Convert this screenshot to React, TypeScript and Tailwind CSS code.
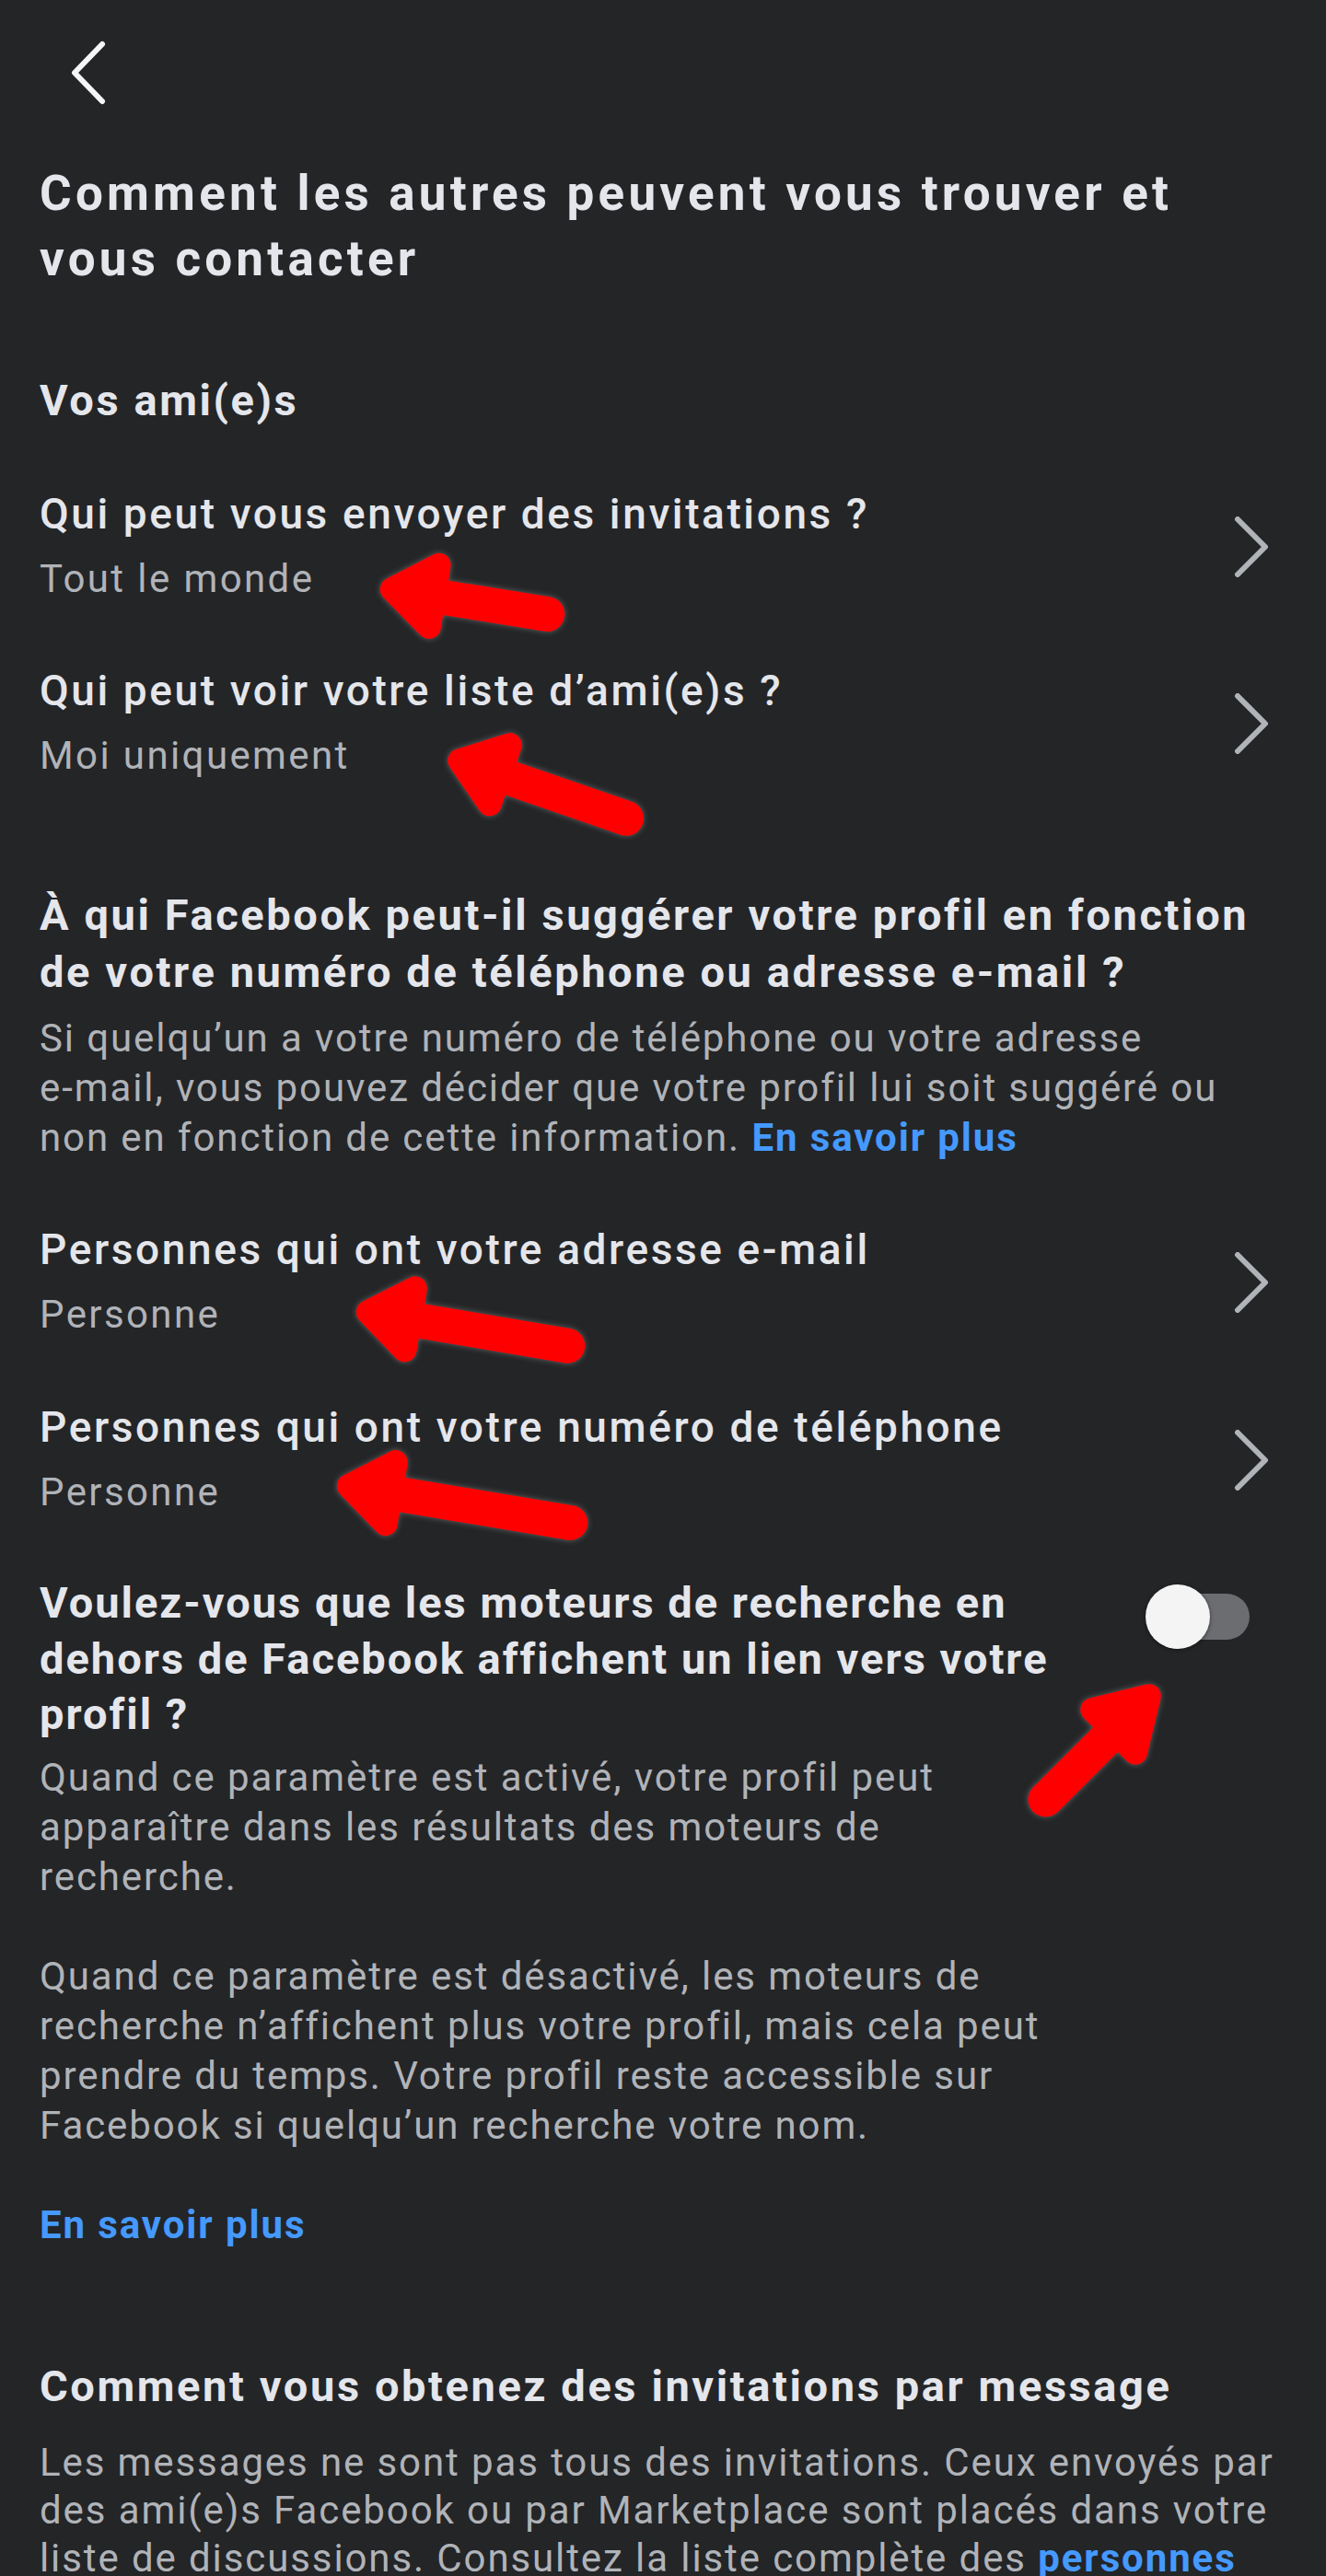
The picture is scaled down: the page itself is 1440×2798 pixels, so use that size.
import React from "react";

// shared text styles
const rowTitle = "text-[46px] leading-[60px] font-medium tracking-[2.6px] text-[#e4e6eb]";
const rowSub = "text-[42px] leading-[60px] tracking-[2.4px] text-[#b0b3b8]";
const heading = "text-[47px] font-bold tracking-[2.6px] text-[#e4e6eb]";
const body = "text-[42px] leading-[54px] tracking-[1.9px] text-[#b0b3b8]";

const Chevron = () => (
  <svg width="40" height="66" viewBox="0 0 40 66" className="shrink-0 mr-[31px]">
    <polyline points="5,3 35,33 5,63" fill="none" stroke="#b0b3b8" strokeWidth="6" strokeLinecap="round" strokeLinejoin="round" />
  </svg>
);

const SettingRow = ({ title, value, className }: { title: string; value: string; className: string }) => (
  <div className={`flex items-center justify-between ${className}`}>
    <div>
      <div className={rowTitle}>{title}</div>
      <div className={`mt-[11px] ${rowSub}`}>{value}</div>
    </div>
    <Chevron />
  </div>
);

type Pt = [number, number];

const Arrow = ({ tip, tail, head = 72, half = 47, shaft = 38 }: { tip: Pt; tail: Pt; head?: number; half?: number; shaft?: number }) => {
  const dx = tail[0] - tip[0];
  const dy = tail[1] - tip[1];
  const len = Math.hypot(dx, dy);
  const ang = (Math.atan2(dy, dx) * 180) / Math.PI;
  const sw = 26;
  return (
    <g transform={`translate(${tip[0]} ${tip[1]}) rotate(${ang})`}>
      <polygon
        points={`${sw / 2},0 ${head - sw / 2},${-(half - sw / 2)} ${head - sw / 2},${half - sw / 2}`}
        fill="#ff0000"
        stroke="#ff0000"
        strokeWidth={sw}
        strokeLinejoin="round"
      />
      <line x1={head - 24} y1={0} x2={len - shaft / 2} y2={0} stroke="#ff0000" strokeWidth={shaft} strokeLinecap="round" />
    </g>
  );
};

const Toggle = () => (
  <div className="relative w-[114px] h-[70px] shrink-0 mt-[10px] ml-auto mr-[52px]">
    <div className="absolute left-[17px] top-[10px] w-[96px] h-[50px] rounded-full bg-[#6c6d71]" />
    <div className="absolute left-0 top-0 w-[70px] h-[70px] rounded-full bg-[#f4f4f4] shadow-[0_1px_4px_rgba(0,0,0,0.5)]" />
  </div>
);

export default function App() {
  return (
    <div className="relative min-h-screen bg-[#242527] font-['Roboto','Liberation_Sans',sans-serif] overflow-hidden">
      {/* top bar */}
      <div className="h-[175px] pl-[76px] pt-[44px]">
        <svg width="40" height="70" viewBox="0 0 40 70">
          <polyline points="35,4 5,35 35,66" fill="none" stroke="#f5f6f7" strokeWidth="6" strokeLinecap="round" strokeLinejoin="round" />
        </svg>
      </div>

      <div className="pl-[43px] pr-[30px] pb-[40px]">
        <h1 className="max-w-[1290px] text-[53px] leading-[71px] font-bold tracking-[4.2px] text-[#e4e6eb]">
          Comment les autres peuvent vous trouver et vous contacter
        </h1>

        <h2 className={`mt-[88px] leading-[60px] ${heading}`}>Vos ami(e)s</h2>

        <SettingRow className="mt-[63px]" title="Qui peut vous envoyer des invitations ?" value="Tout le monde" />
        <SettingRow className="mt-[61px]" title="Qui peut voir votre liste d’ami(e)s ?" value="Moi uniquement" />

        <h2 className={`mt-[112px] max-w-[1354px] leading-[62px] ${heading}`}>
          À qui Facebook peut-il suggérer votre profil en fonction de votre numéro de téléphone ou adresse e-mail ?
        </h2>
        <p className={`mt-[14px] max-w-[1320px] ${body}`}>
          Si quelqu’un a votre numéro de téléphone ou votre adresse <span className="whitespace-nowrap">e-mail,</span> vous
          pouvez décider que votre profil lui soit suggéré ou non en fonction de cette information.{" "}
          <span className="font-bold text-[#4599ff]">En savoir plus</span>
        </p>

        <SettingRow className="mt-[64px]" title="Personnes qui ont votre adresse e-mail" value="Personne" />
        <SettingRow className="mt-[62px]" title="Personnes qui ont votre numéro de téléphone" value="Personne" />

        <div className="mt-[60px] flex items-start">
          <div className="w-[1115px] shrink-0">
            <h2 className="text-[47px] leading-[60.5px] font-bold tracking-[2px] text-[#e4e6eb]">
              Voulez-vous que les moteurs de recherche en dehors de Facebook affichent un lien vers votre profil ?
            </h2>
            <p className={`mt-[11px] ${body}`}>
              Quand ce paramètre est activé, votre profil peut apparaître dans les résultats des moteurs de recherche.
            </p>
            <p className={`mt-[54px] ${body}`}>
              Quand ce paramètre est désactivé, les moteurs de recherche n’affichent plus votre profil, mais cela peut
              prendre du temps. Votre profil reste accessible sur Facebook si quelqu’un recherche votre nom.
            </p>
            <p className={`mt-[54px] ${body}`}>
              <span className="font-bold text-[#4599ff]">En savoir plus</span>
            </p>
          </div>
          <Toggle />
        </div>

        <h2 className={`mt-[117px] leading-[62px] ${heading}`}>Comment vous obtenez des invitations par message</h2>
        <p className="mt-[26px] text-[42px] leading-[52px] tracking-[1.9px] text-[#b0b3b8]">
          Les messages ne sont pas tous des invitations. Ceux envoyés par des ami(e)s Facebook ou par Marketplace sont
          placés dans votre liste de discussions. Consultez la liste complète des{" "}
          <span className="font-bold text-[#4599ff]">personnes</span> qui peuvent vous envoyer des messages.
        </p>
      </div>

      {/* red annotation arrows */}
      <svg
        className="absolute left-0 top-0 pointer-events-none [filter:drop-shadow(0_0_3px_rgba(150,150,150,0.55))]"
        width="1440"
        height="2798"
        viewBox="0 0 1440 2798"
      >
        <Arrow tip={[413, 638]} tail={[613, 670]} />
        <Arrow tip={[487, 822]} tail={[698, 895]} />
        <Arrow tip={[387, 1423]} tail={[635, 1465]} />
        <Arrow tip={[366, 1612]} tail={[638, 1657]} />
        <Arrow tip={[1257, 1833]} tail={[1122, 1968]} head={80} half={46} />
      </svg>
    </div>
  );
}
